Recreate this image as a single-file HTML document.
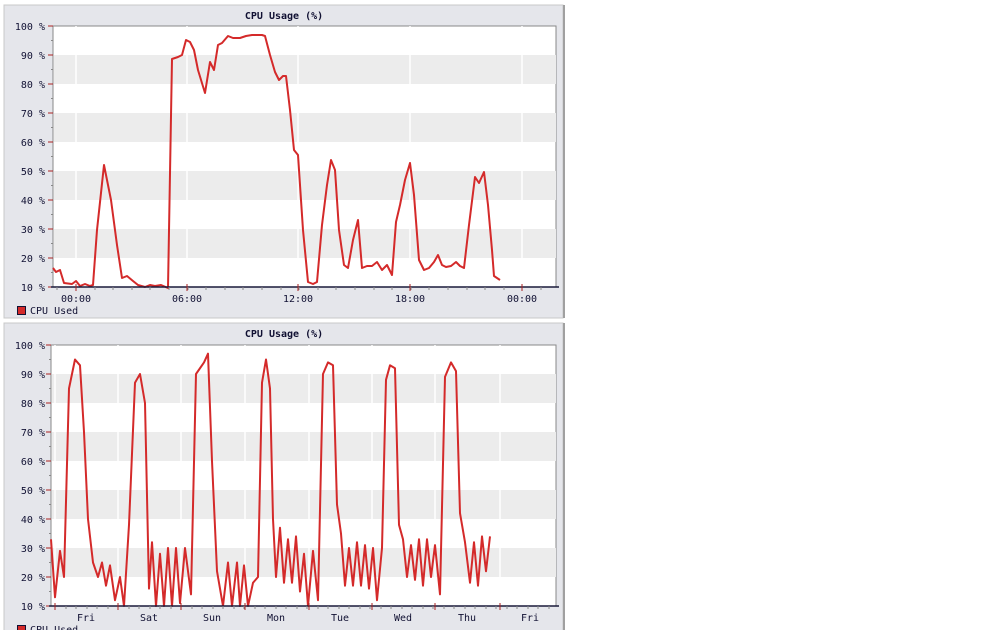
<!DOCTYPE html>
<html><head><meta charset="utf-8"><style>
body{margin:0;background:#fff;width:1008px;height:630px;overflow:hidden}
svg{position:absolute;left:0;top:0}
text{font-family:"DejaVu Sans Mono","Liberation Mono",monospace;font-size:10px;fill:#111133}
</style></head><body>
<svg id="s" width="1008" height="630" xmlns="http://www.w3.org/2000/svg"></svg>
<script>
const s=document.getElementById('s');let h='';
function chart(top,left,y100,y10,xlabels,pts,majors,minors){
 const pt=top, pb=top+313;
 h+=`<rect x="4" y="${top}" width="559" height="${top==5?313:310}" fill="#e5e6eb" stroke="#c8c8c8" stroke-width="1"/>`;
 h+=`<rect x="563" y="${top}" width="2" height="${top==5?313:310}" fill="#a0a0a0"/>`;
 h+=`<text x="284" y="${top+14}" text-anchor="middle" font-weight="bold">CPU Usage (%)</text>`;
 const st=(y10-y100)/9;
 h+=`<rect x="${left}" y="${y100}" width="${556-left}" height="${y10-y100}" fill="#fff" stroke="#888" stroke-width="1"/>`;
 for(let i=1;i<9;i+=2){h+=`<rect x="${left+1}" y="${y100+i*st}" width="${555-left}" height="${st}" fill="#ececec"/>`;}
 majors.forEach(x=>{h+=`<line x1="${x}" y1="${y100}" x2="${x}" y2="${y10}" stroke="#fff" stroke-width="1.5"/>`});
 for(let i=0;i<10;i++){const y=y100+i*st;h+=`<text x="45" y="${y+4}" text-anchor="end">${100-i*10} %</text><line x1="${left-5}" y1="${y}" x2="${left}" y2="${y}" stroke="#aa2222"/>`;
  if(i<9)h+=`<line x1="${left-2}" y1="${y+st/2}" x2="${left}" y2="${y+st/2}" stroke="#888"/>`;}
 let d=pts.map(p=>p.join(',')).join(' ');
 h+=`<polyline points="${d}" fill="none" stroke="#d42a2a" stroke-width="2" stroke-linejoin="round"/>`;
 h+=`<line x1="${left-2}" y1="${y10}" x2="559" y2="${y10}" stroke="#1a1a3a" stroke-width="1.5"/>`;
 minors.forEach(x=>{h+=`<line x1="${x}" y1="${y10}" x2="${x}" y2="${y10+3}" stroke="#888"/>`});
 majors.forEach(x=>{h+=`<line x1="${x}" y1="${y10-3}" x2="${x}" y2="${y10+4}" stroke="#aa2222"/>`});
 xlabels.forEach(([x,t])=>{h+=`<text x="${x}" y="${y10+15}" text-anchor="middle">${t}</text>`});
 h+=`<rect x="17.5" y="${y10+19.5}" width="8" height="8" fill="#d42a2a" stroke="#111133"/><text x="30" y="${y10+27}">CPU Used</text>`;
}
const p1=[[53,268],[56,272],[60,270],[64,283],[72,284],[76,281],[80,286],[85,284],[90,286],[93,285],[97,230],[104,165],[111,200],[117,245],[122,278],[127,276],[133,281],[138,285],[145,287],[150,285],[155,286],[161,285],[168,288],[172,59],[178,57],[182,55],[186,40],[190,42],[194,50],[198,70],[205,93],[210,62],[214,70],[218,45],[222,43],[228,36],[233,38],[240,38],[246,36],[252,35],[262,35],[265,36],[270,55],[275,72],[279,80],[283,76],[286,76],[290,110],[294,150],[298,155],[303,230],[308,282],[313,284],[317,282],[322,225],[327,185],[331,160],[335,170],[339,230],[344,265],[348,268],[353,240],[358,220],[362,268],[367,266],[372,266],[377,262],[382,270],[387,265],[392,275],[396,222],[400,205],[405,180],[410,163],[414,195],[419,260],[424,270],[429,268],[434,262],[438,255],[442,265],[446,267],[451,266],[456,262],[460,266],[464,268],[469,225],[475,177],[479,183],[484,172],[488,205],[492,250],[494,276],[500,280]];
let m1=[];for(let x=76-2*18.6;x<556;x+=18.6)if(x>53)m1.push(Math.round(x));
chart(5,53,26,287,[[76,'00:00'],[187,'06:00'],[298,'12:00'],[410,'18:00'],[522,'00:00']],p1,[76,187,298,410,522],m1);
const v2=[[51,33],[55,13],[60,29],[64,20],[69,85],[75,95],[80,93],[84,70],[88,40],[93,25],[98,20],[102,25],[106,17],[110,24],[115,12],[120,20],[124,10],[129,38],[135,87],[140,90],[145,80],[149,16],[152,32],[156,10],[160,28],[164,10],[168,30],[172,10],[176,30],[180,11],[185,30],[191,14],[196,90],[204,94],[208,97],[212,60],[217,22],[223,10],[228,25],[232,10],[237,25],[240,10],[244,24],[248,10],[253,18],[258,20],[262,87],[266,95],[270,85],[273,40],[276,20],[280,37],[284,18],[288,33],[292,18],[296,34],[300,15],[304,28],[308,10],[313,29],[318,12],[323,90],[328,94],[333,93],[337,45],[341,35],[345,17],[349,30],[353,17],[357,32],[361,17],[365,31],[369,16],[373,30],[377,12],[382,30],[386,88],[390,93],[395,92],[399,38],[403,33],[407,20],[411,31],[415,19],[419,33],[423,17],[427,33],[431,20],[435,31],[440,14],[445,89],[451,94],[456,91],[460,42],[465,32],[470,18],[474,32],[478,17],[482,34],[486,22],[490,34]];
const p2=v2.map(([x,v])=>[x,(345+(100-v)*2.9).toFixed(1)]);
const maj2=[55,118,181,245,309,372,435,500];let m2=[];for(let x=55;x<556;x+=63/6)m2.push(Math.round(x));
chart(323,51,345,606,[[86,'Fri'],[149,'Sat'],[212,'Sun'],[276,'Mon'],[340,'Tue'],[403,'Wed'],[467,'Thu'],[530,'Fri']],p2,maj2,m2);
s.innerHTML=h;
</script>
</body></html>
